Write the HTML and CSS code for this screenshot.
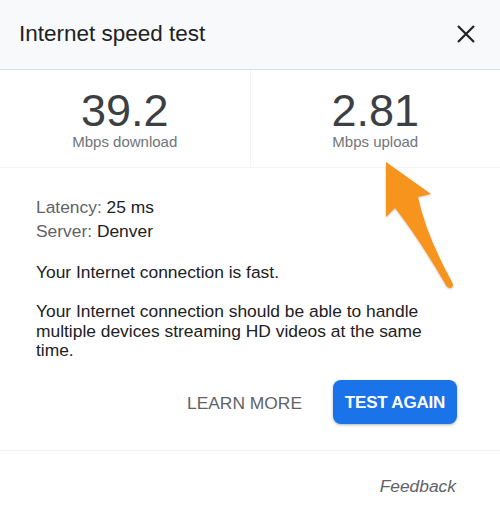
FILE: index.html
```html
<!DOCTYPE html>
<html>
<head>
<meta charset="utf-8">
<link rel="stylesheet" href="styles.css">
</head>
<body>
<div class="dialog">
  <header class="header">
    <h1 class="title">Internet speed test</h1>
    <button class="close" aria-label="Close">
      <svg width="18" height="18" viewBox="0 0 18 18"><path d="M1 1L17 17M17 1L1 17" stroke="#202124" stroke-width="2.2" fill="none"/></svg>
    </button>
  </header>
  <section class="stats">
    <div class="stat">
      <div class="value">39.2</div>
      <div class="unit">Mbps download</div>
    </div>
    <div class="stat">
      <div class="value">2.81</div>
      <div class="unit">Mbps upload</div>
    </div>
  </section>
  <section class="body">
    <div class="meta">
      <div><span class="key">Latency:</span> 25 ms</div>
      <div><span class="key">Server:</span> Denver</div>
    </div>
    <p class="msg">Your Internet connection is fast.</p>
    <p class="msg">Your Internet connection should be able to handle multiple devices streaming HD videos at the same time.</p>
    <div class="actions">
      <span class="learn">LEARN MORE</span>
      <button class="again">TEST AGAIN</button>
    </div>
  </section>
  <footer class="footer">
    <span class="feedback">Feedback</span>
  </footer>
  <svg class="arrow" width="500" height="525" viewBox="0 0 500 525">
    <path d="M386,162 L431,194 L418,197 Q426,235 453,284 Q453,290 447,287 Q420,240 395,208 L386,217 Z" fill="#f7941d"/>
  </svg>
</div>
</body>
</html>
```

FILE: styles.css
```css
* { box-sizing: border-box; }
html, body { margin: 0; padding: 0; background: #fff; }
body { font-family: "Liberation Sans", Arial, sans-serif; color: #202124; }
.dialog { position: relative; width: 500px; height: 525px; overflow: hidden; }

.header {
  height: 70px;
  display: flex;
  align-items: center;
  justify-content: space-between;
  padding: 0 25px 2px 19px;
  background: #f8f9fa;
  border-bottom: 1px solid #dadce0;
}
.title { margin: 0; font-size: 22.5px; font-weight: normal; line-height: 26px; color: #202124; }
.close { border: 0; background: none; padding: 0; width: 18px; height: 18px; display: flex; margin-top: 1px; }

.stats { display: flex; border-bottom: 1px solid #f1f3f4; }
.stat {
  flex: 1;
  display: flex;
  flex-direction: column;
  align-items: center;
  padding: 19px 0 17px;
}
.stat + .stat { border-left: 1px solid #f1f3f4; }
.value { font-size: 45px; line-height: 44px; color: #3c4043; }
.unit { font-size: 15px; line-height: 17px; color: #70757a; }

.body { padding: 27px 43px 26px 36px; border-bottom: 1px solid #f1f3f4; }
.meta { font-size: 17.4px; line-height: 24px; color: #202124; }
.key { color: #5f6368; }
.msg { margin: 19.5px 0 0; font-size: 17.4px; line-height: 19.5px; color: #202124; }
.msg + .msg { margin-top: 20px; }
.actions {
  margin-top: 19.5px;
  display: flex;
  justify-content: flex-end;
  align-items: center;
  gap: 31px;
}
.learn { font-size: 17.4px; color: #5f6368; line-height: 20px; padding-top: 1px; }
.again {
  width: 124px;
  height: 44px;
  border: 0;
  border-radius: 8px;
  background: #1a73e8;
  color: #fff;
  font-family: "Liberation Sans", Arial, sans-serif;
  font-weight: bold;
  font-size: 17px;
  letter-spacing: -0.2px;
  box-shadow: 0 1px 3px rgba(0,0,0,0.3);
  padding: 1px 0 0;
}

.footer { padding: 25px 44px 0 36px; text-align: right; }
.feedback { font-style: italic; font-size: 17.4px; line-height: 20px; color: #5f6368; }

.arrow { position: absolute; left: 0; top: 0; pointer-events: none; filter: drop-shadow(0 1px 1px rgba(0,0,0,0.2)); }
```
